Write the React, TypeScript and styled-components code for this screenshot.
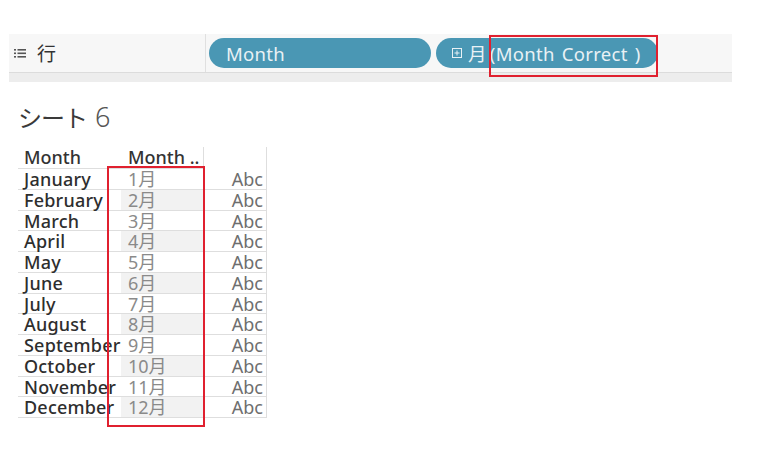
import React from "react";
import styled, { createGlobalStyle } from "styled-components";

const Global = createGlobalStyle`
  html, body { margin: 0; padding: 0; background: #fff; }
  body { font-family: "Noto Sans", "Noto Sans CJK JP", sans-serif; }
`;

const Page = styled.div`
  position: relative;
  width: 773px;
  height: 469px;
  overflow: hidden;
  padding-top: 34px;
  box-sizing: border-box;
`;

const ShelfWrap = styled.div`
  margin-left: 9px;
  width: 723px;
`;

const Shelf = styled.div`
  display: flex;
  align-items: center;
  height: 38px;
  background: #f7f7f7;
  border-bottom: 1px solid #dcdcdc;
`;

const ShelfLabel = styled.div`
  display: flex;
  align-items: center;
  gap: 11px;
  width: 197px;
  height: 100%;
  padding-left: 5px;
  box-sizing: border-box;
  border-right: 1px solid #e0e0e0;
  font-size: 19px;
  color: #333;
`;

const ShelfBand = styled.div`
  height: 9px;
  background: #ededed;
`;

const Pills = styled.div`
  display: flex;
  gap: 5px;
  padding-left: 3px;
`;

const Pill = styled.div<{ $pad: number }>`
  display: flex;
  align-items: center;
  gap: 6px;
  width: 222px;
  height: 30px;
  border-radius: 15px;
  background: #4a97b4;
  color: #e9f1f5;
  font-size: 18.5px;
  letter-spacing: 0.3px;
  padding-left: ${(p) => p.$pad}px;
  box-sizing: border-box;
  white-space: nowrap;
`;

const PillText = styled.span`
  word-spacing: 2px;
`;

const PillKanji = styled.span`
  margin-right: 3px;
`;

const Title = styled.div`
  display: flex;
  align-items: baseline;
  gap: 8px;
  margin: 15px 0 0 18px;
  height: 40px;
  line-height: 40px;
  color: #3a3a3a;
`;

const TitleText = styled.span`
  font-size: 24px;
  font-family: "Noto Sans CJK JP", sans-serif;
  font-weight: 400;
  letter-spacing: -1px;
`;

const TitleNum = styled.span`
  font-size: 27px;
  font-weight: 300;
  color: #555;
`;

const Table = styled.div`
  margin: 10px 0 0 18px;
  display: grid;
  grid-template-columns: 103px 83px 62px;
  width: 248px;
  border-right: 1px solid #dedede;
`;

const HeadCell = styled.div<{ $line?: boolean; $pl: number }>`
  height: 22px;
  line-height: 20px;
  font-size: 18px;
  font-weight: 500;
  color: #333;
  padding-left: ${(p) => p.$pl}px;
  border-bottom: 1px solid #dedede;
  border-right: ${(p) => (p.$line ? "1px solid #dedede" : "none")};
  box-sizing: border-box;
  white-space: nowrap;
`;

const EmptyHead = styled.div`
  height: 22px;
`;

const Cell = styled.div<{ $kind: "name" | "num" | "abc"; $band?: boolean }>`
  height: 20.75px;
  line-height: 19px;
  padding-top: 1px;
  font-size: 18px;
  border-bottom: 1px solid #dedede;
  white-space: nowrap;
  box-sizing: border-box;
  ${(p) =>
    p.$kind === "name"
      ? `padding-left: 6px; color: #2e2e2e; font-weight: 500; letter-spacing: 0.2px;`
      : p.$kind === "num"
      ? `padding-left: 7px; color: #8a8a8a; background: ${p.$band ? "#f2f2f2" : "#fff"};`
      : `text-align: right; padding-right: 3px; color: #6e6e6e;`}
`;

const RedBox = styled.div<{ $x: number; $y: number; $w: number; $h: number }>`
  position: absolute;
  left: ${(p) => p.$x}px;
  top: ${(p) => p.$y}px;
  width: ${(p) => p.$w}px;
  height: ${(p) => p.$h}px;
  border: 2px solid #e0202f;
  box-sizing: border-box;
  pointer-events: none;
`;

const ListIcon = () => (
  <svg width="12" height="11" viewBox="0 0 12 11">
    {[1, 4.5, 8].map((y) => (
      <g key={y} fill="#555">
        <rect x="0" y={y} width="2" height="1.6" />
        <rect x="3.5" y={y} width="8.5" height="1.6" />
      </g>
    ))}
  </svg>
);

const BoxIcon = () => (
  <svg width="10" height="10" viewBox="0 0 10 10">
    <rect x="0.5" y="0.5" width="9" height="9" fill="none" stroke="#e9f1f5" strokeWidth="1" />
    <path d="M2.5 5H7.5M5 2.5V7.5" stroke="#e9f1f5" strokeWidth="1" />
  </svg>
);

const months = [
  "January",
  "February",
  "March",
  "April",
  "May",
  "June",
  "July",
  "August",
  "September",
  "October",
  "November",
  "December",
];

export default function App() {
  return (
    <Page>
      <Global />
      <ShelfWrap>
        <Shelf>
          <ShelfLabel>
            <ListIcon />
            <span>行</span>
          </ShelfLabel>
          <Pills>
            <Pill $pad={17}>Month</Pill>
            <Pill $pad={16}>
              <BoxIcon />
              <PillText>
                <PillKanji>月</PillKanji>(Month Correct )
              </PillText>
            </Pill>
          </Pills>
        </Shelf>
        <ShelfBand />
      </ShelfWrap>
      <Title>
        <TitleText>シート</TitleText>
        <TitleNum>6</TitleNum>
      </Title>
      <Table>
        <HeadCell $pl={6}>Month</HeadCell>
        <HeadCell $pl={7} $line>
          Month ..
        </HeadCell>
        <EmptyHead />
        {months.map((m, i) => (
          <React.Fragment key={m}>
            <Cell $kind="name">{m}</Cell>
            <Cell $kind="num" $band={i % 2 === 1}>
              {i + 1}月
            </Cell>
            <Cell $kind="abc">Abc</Cell>
          </React.Fragment>
        ))}
      </Table>
      <RedBox $x={489} $y={35} $w={169} $h={42} />
      <RedBox $x={107} $y={166} $w={98} $h={261} />
    </Page>
  );
}
